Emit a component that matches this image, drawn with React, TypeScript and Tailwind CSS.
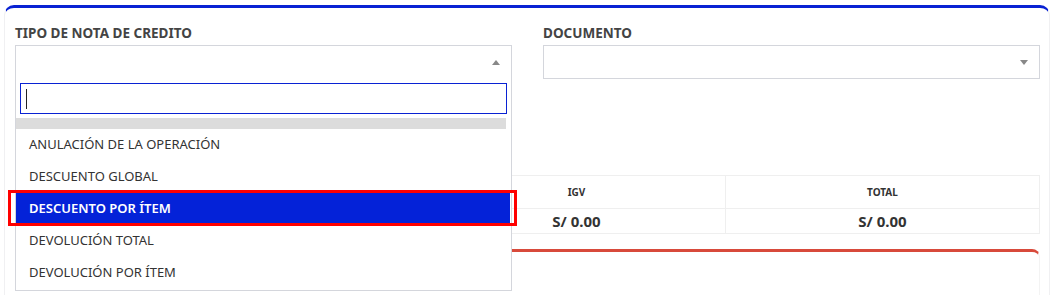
import { useState } from "react";

const OPTIONS = [
  "ANULACIÓN DE LA OPERACIÓN",
  "DESCUENTO GLOBAL",
  "DESCUENTO POR ÍTEM",
  "DEVOLUCIÓN TOTAL",
  "DEVOLUCIÓN POR ÍTEM",
];

function Caret({ up }: { up?: boolean }) {
  return (
    <svg width="8" height="5" viewBox="0 0 8 5" className="shrink-0">
      {up ? <path d="M0 5 L4 0 L8 5 Z" fill="#888" /> : <path d="M0 0 L8 0 L4 5 Z" fill="#888" />}
    </svg>
  );
}

export default function App() {
  const [active] = useState(2);

  return (
    <div className="bg-white font-['Noto_Sans',sans-serif] text-[#333] pt-[5px] pl-[4px] overflow-hidden h-[295px]">
      {/* main card */}
      <div className="w-[1046px] rounded-t-[10px] border-t-[3px] border-x border-t-[#0922d3] border-x-[#f0f0f2] pl-[10px] pr-[9px] pt-[17px] pb-10">
        <div className="grid grid-cols-2 gap-x-[31px]">
          {/* left column with open select */}
          <div className="relative">
            <p className="text-[13.5px] font-bold text-[#444] leading-[16px]">TIPO DE NOTA DE CREDITO</p>
            <div className="mt-[4px] h-[34px] border border-[#d4d6dc] flex items-center justify-end pr-[11px]">
              <Caret up />
            </div>

            {/* dropdown menu */}
            <div className="absolute left-0 top-[53px] z-20 w-[497px] bg-white border border-t-0 border-[#d4d6dc] pb-[1px]">
              <div className="px-[4px] pt-[5px] pb-[4px]">
                <div className="h-[31px] border border-[#0922d3] flex items-center pl-[5px]">
                  <span className="block w-[1px] h-[20px] bg-[#222]" />
                </div>
              </div>
              <div className="h-[11px] bg-[#dcdcdc] mr-[5px]" />
              {OPTIONS.map((o, i) => (
                <div
                  key={o}
                  className={
                    i === active
                      ? "h-[32px] flex items-center pl-[13px] text-[13px] font-semibold text-white bg-[#0422d8] mr-[1px]"
                      : "h-[32px] flex items-center pl-[13px] text-[13px] text-[#333]"
                  }
                >
                  {o}
                </div>
              ))}
            </div>
            {/* red highlight box */}
            <div className="absolute z-30 left-[-7px] top-[165px] w-[509px] h-[36px] border-[3px] border-[#ff0000] pointer-events-none" />
          </div>

          <div>
            <p className="text-[13.5px] font-bold text-[#444] leading-[16px]">DOCUMENTO</p>
            <div className="mt-[4px] h-[34px] border border-[#d4d6dc] flex items-center justify-end pr-[11px]">
              <Caret />
            </div>
          </div>
        </div>

        {/* hidden field behind menu */}
        <div className="grid grid-cols-2 gap-x-[31px] mt-[27px]">
          <div className="h-[55px] border border-[#d4d6dc] border-r-2" />
          <div />
        </div>

        {/* totals table */}
        <div className="mt-[14px] grid grid-cols-[411px_298px_1fr] border border-[#efefef] text-center">
          <div className="h-[33px] border-b border-[#efefef] flex items-center justify-center text-[10px] font-bold">SUBTOTAL</div>
          <div className="h-[33px] border-b border-l border-[#efefef] flex items-center justify-center text-[10px] font-bold text-[#333]">IGV</div>
          <div className="h-[33px] border-b border-l border-[#efefef] flex items-center justify-center text-[10px] font-bold text-[#333]">TOTAL</div>
          <div className="h-[24px] flex items-center justify-center text-[15px] font-bold">S/ 0.00</div>
          <div className="h-[24px] border-l border-[#efefef] flex items-center justify-center text-[15px] font-bold text-[#333]">S/ 0.00</div>
          <div className="h-[24px] border-l border-[#efefef] flex items-center justify-center text-[15px] font-bold text-[#333]">S/ 0.00</div>
        </div>

        {/* next card */}
        <div className="mt-[15px] h-[80px] rounded-t-[8px] border-t-[3px] border-r border-t-[#d84a3b] border-r-[#f3f3f3]" />
      </div>
    </div>
  );
}
